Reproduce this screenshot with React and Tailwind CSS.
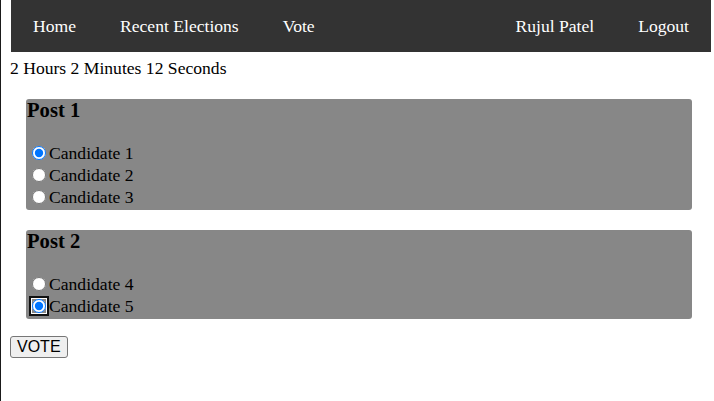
import { useState } from 'react';

const posts = [
  { id: 1, title: 'Post 1', candidates: ['Candidate 1', 'Candidate 2', 'Candidate 3'], selected: 0 },
  { id: 2, title: 'Post 2', candidates: ['Candidate 4', 'Candidate 5'], selected: 1 },
];

function NavLink({ children }) {
  return <a className="px-[22px] text-white text-[17.6px] leading-[20px] cursor-pointer">{children}</a>;
}

function PostCard({ post, focused }) {
  const [choice, setChoice] = useState(post.selected);

  return (
    <div className="ml-[16px] mr-[19px] bg-[#878787] rounded-[3px] pl-px pb-[2px]">
      <h3 className="text-[20.6px] font-bold leading-[22px] h-[22px] mb-[21px]">{post.title}</h3>
      {post.candidates.map((c, i) => (
        <label key={c} className="flex items-center h-[22px] text-[17.6px]">
          <input
            type="radio"
            name={'post' + post.id}
            checked={choice === i}
            onChange={() => setChoice(i)}
            className={
              'ml-[5px] mr-[3px] w-[14px] h-[14px] accent-[#0075ff] ' +
              (focused && choice === i ? 'rounded-[5px] shadow-[0_0_0_1px_#fff,0_0_0_3px_#101010]' : '')
            }
          />
          {c}
        </label>
      ))}
    </div>
  );
}

export default function App() {
  return (
    <div className="min-h-screen border-l border-[#1a1a1a] pl-[9px] pr-[3px] text-black font-['Liberation_Serif',serif]">
      <nav className="ml-px h-[52px] bg-[#333333] flex items-center">
        <NavLink>Home</NavLink>
        <NavLink>Recent Elections</NavLink>
        <NavLink>Vote</NavLink>
        <div className="flex-1" />
        <NavLink>Rujul Patel</NavLink>
        <NavLink>Logout</NavLink>
      </nav>

      <p className="mt-[6px] text-[17.6px] leading-[20px]">2 Hours 2 Minutes 12 Seconds</p>

      <div className="mt-[21px] flex flex-col gap-[20px]">
        <PostCard post={posts[0]} />
        <PostCard post={posts[1]} focused />
      </div>

      <button className="mt-[17px] border border-[#767676] bg-[#efefef] rounded-[3px] px-[6px] h-[22px] leading-[18px] text-[16px] font-['Liberation_Sans',Arial,sans-serif]">
        VOTE
      </button>
    </div>
  );
}
